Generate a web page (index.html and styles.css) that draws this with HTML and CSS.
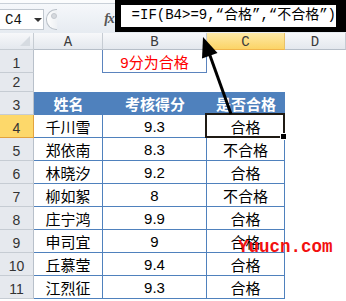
FILE: index.html
```html
<!DOCTYPE html>
<html lang="zh">
<head>
<meta charset="utf-8">
<link rel="stylesheet" href="styles.css">
</head>
<body>
<div class="app">
  <div class="fbar">
    <div class="namebox"><span class="ref">C4</span><span class="drop"></span></div>
    <div class="sep"></div>
    <div class="fx">fx</div>
    <div class="formula">=IF(B4&gt;=9,“合格”,“不合格”)</div>
  </div>
  <div class="sheet">
    <div class="corner"></div>
    <div class="colh">A</div>
    <div class="colh">B</div>
    <div class="colh active">C</div>
    <div class="colh">D</div>

    <div class="rowh">1</div>
    <div class="c"></div>
    <div class="c note">9分为合格</div>
    <div class="c"></div>
    <div class="c"></div>

    <div class="rowh">2</div>
    <div class="c"></div>
    <div class="c"></div>
    <div class="c"></div>
    <div class="c"></div>

    <div class="rowh">3</div>
    <div class="c th">姓名</div>
    <div class="c th">考核得分</div>
    <div class="c th">是否合格</div>
    <div class="c"></div>

    <div class="rowh active">4</div>
    <div class="c td">千川雪</div>
    <div class="c td">9.3</div>
    <div class="c td last sel">合格<span class="handle"></span></div>
    <div class="c"></div>

    <div class="rowh">5</div>
    <div class="c td">郑依南</div>
    <div class="c td">8.3</div>
    <div class="c td last">不合格</div>
    <div class="c"></div>

    <div class="rowh">6</div>
    <div class="c td">林晓汐</div>
    <div class="c td">9.2</div>
    <div class="c td last">合格</div>
    <div class="c"></div>

    <div class="rowh">7</div>
    <div class="c td">柳如絮</div>
    <div class="c td">8</div>
    <div class="c td last">不合格</div>
    <div class="c"></div>

    <div class="rowh">8</div>
    <div class="c td">庄宁鸿</div>
    <div class="c td">9.9</div>
    <div class="c td last">合格</div>
    <div class="c"></div>

    <div class="rowh">9</div>
    <div class="c td">申司宜</div>
    <div class="c td">9</div>
    <div class="c td last">合格</div>
    <div class="c"></div>

    <div class="rowh">10</div>
    <div class="c td">丘慕莹</div>
    <div class="c td">9.4</div>
    <div class="c td last">合格</div>
    <div class="c"></div>

    <div class="rowh">11</div>
    <div class="c td">江烈征</div>
    <div class="c td">9.3</div>
    <div class="c td last">合格</div>
    <div class="c"></div>
  </div>
  <svg class="arrow" width="346" height="301" viewBox="0 0 346 301">
    <line x1="231" y1="114" x2="208" y2="50" stroke="#000" stroke-width="3"/>
    <polygon points="203,37 217.5,53 202,58.5" fill="#000"/>
  </svg>
  <div class="mark">Yuucn.com</div>
</div>
</body>
</html>
```
FILE: styles.css
```css
html, body {
  margin: 0;
  padding: 0;
  background: #fff;
}
.app {
  position: relative;
  width: 346px;
  height: 301px;
  overflow: hidden;
}
.fbar {
  display: flex;
  align-items: flex-start;
  height: 33px;
  box-sizing: border-box;
  background: linear-gradient(#f6f8fb, #e6ebf1);
  border-top: 3px solid #fbfcfd;
  box-shadow: inset 0 1px 0 #c9d0d8;
}
.namebox {
  position: relative;
  margin-top: 6px;
  width: 46px;
  height: 21px;
  box-sizing: border-box;
  background: #fff;
  border: 1px solid #c0c7cf;
  border-left: none;
  display: flex;
  align-items: center;
}
.ref {
  font-family: "Liberation Mono", monospace;
  font-size: 14px;
  color: #111;
  margin-left: 5px;
}
.drop {
  position: absolute;
  left: 34px;
  top: 8px;
  width: 0;
  height: 0;
  border-left: 4px solid transparent;
  border-right: 4px solid transparent;
  border-top: 4px solid #333;
}
.sep {
  position: relative;
  margin-top: 6px;
  margin-left: 2px;
  width: 12px;
  height: 21px;
  box-sizing: border-box;
  border: 1px solid #b9c0c8;
  border-right: none;
  border-radius: 10px 0 0 10px;
  background: linear-gradient(90deg, #fdfdfd, #eef1f4);
}
.sep::before {
  content: "";
  position: absolute;
  left: 4px;
  top: 3px;
  width: 6px;
  height: 6px;
  border-radius: 50%;
  background: #d5d9de;
  border: 1px solid #c3c8ce;
  box-sizing: border-box;
}
.fx {
  margin-left: 47px;
  margin-top: 8px;
  width: 12px;
  font-family: "Liberation Serif", serif;
  font-style: italic;
  font-weight: bold;
  font-size: 14px;
  color: #555;
  letter-spacing: -1px;
}
.formula {
  margin-top: -3px;
  margin-left: -1px;
  flex: 1;
  height: 32px;
  box-sizing: border-box;
  border-style: solid;
  border-color: #000;
  border-width: 5px 10px 5px 6px;
  background: #fff;
  font-family: "Liberation Mono", "Noto Sans CJK SC", monospace;
  font-size: 14px;
  line-height: 21px;
  padding-left: 11px;
  color: #000;
  white-space: nowrap;
}
.sheet {
  display: grid;
  grid-template-columns: 34px 69px 104px 78px 61px;
  grid-template-rows: 17px 23px 19px repeat(9, 23px);
}
.corner {
  position: relative;
  background: linear-gradient(#f7f8fa, #e4e8ee);
  border-right: 1px solid #c6ccd3;
  border-bottom: 1px solid #c6ccd3;
}
.corner::after {
  content: "";
  position: absolute;
  right: 3px;
  bottom: 3px;
  width: 0;
  height: 0;
  border-left: 10px solid transparent;
  border-bottom: 10px solid #d6dbe1;
}
.colh {
  background: linear-gradient(#f7f8fa, #e4e8ee);
  border-right: 1px solid #c6ccd3;
  border-bottom: 1px solid #b6bec8;
  font-family: "Liberation Mono", monospace;
  font-size: 14px;
  color: #3a3a3a;
  display: flex;
  align-items: center;
  justify-content: center;
  box-sizing: border-box;
  padding-top: 1px;
}
.colh.active {
  background: linear-gradient(#fde9a6, #fbd467);
  border-bottom: 1px solid #f1b64c;
  border-right: 1px solid #e8c26a;
}
.rowh {
  background: #e6e9ee;
  border-right: 1px solid #b8c0ca;
  border-bottom: 1px solid #c6ccd3;
  box-sizing: border-box;
  font-family: "Liberation Sans", sans-serif;
  font-size: 14px;
  color: #333;
  display: flex;
  align-items: flex-end;
  justify-content: center;
  padding-bottom: 1px;
}
.rowh.active {
  background: #fdd86a;
  border-right: 1px solid #e2a23e;
  border-bottom: 1px solid #e2a23e;
}
.c {
  box-sizing: border-box;
  display: flex;
  align-items: center;
  justify-content: center;
  font-family: "Liberation Sans", "Noto Sans CJK SC", sans-serif;
  font-size: 15px;
  color: #000;
  white-space: nowrap;
}
.note {
  color: #ff0000;
  border: 1px solid #5b84be;
  border-top: none;
  margin-left: -1px;
}
.th {
  background: #4f81bd;
  color: #fff;
  font-weight: bold;
}
.td {
  border-bottom: 1px solid #4f81bd;
  border-right: 1px solid #4f81bd;
}
.sel {
  position: relative;
}
.sel::after {
  content: "";
  position: absolute;
  left: -2px;
  top: -2px;
  right: -1px;
  bottom: -1px;
  border: 2px solid #1f1a14;
}
.handle {
  position: absolute;
  right: -3px;
  bottom: -3px;
  width: 5px;
  height: 5px;
  background: #000;
  border: 1px solid #fff;
  z-index: 2;
}
.arrow {
  position: absolute;
  left: 0;
  top: 0;
  pointer-events: none;
}
.mark {
  position: absolute;
  left: 238px;
  top: 238px;
  font-family: "Liberation Mono", monospace;
  font-weight: bold;
  font-size: 17.5px;
  line-height: 18px;
  color: #f21010;
}
```
